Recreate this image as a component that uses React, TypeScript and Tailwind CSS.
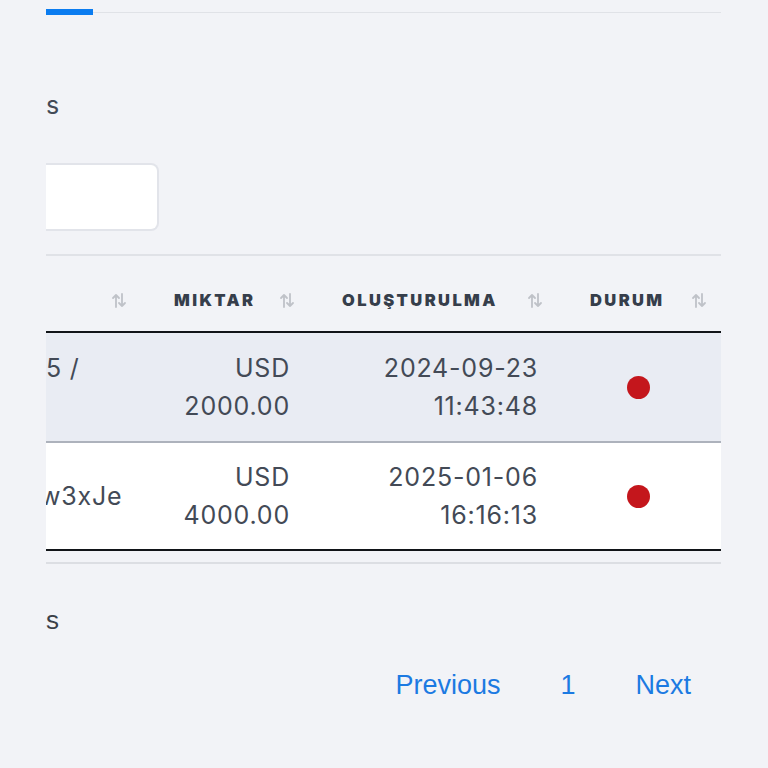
// App.tsx — clipped DataTables view (mobile, scrolled horizontally)

interface Row {
  ref: string[]
  refShift: boolean
  amount: string[]
  created: string[]
  stripe: boolean
}

const rows: Row[] = [
  { ref: ['5 /', '\u00a0'], refShift: false, amount: ['USD', '2000.00'], created: ['2024-09-23', '11:43:48'], stripe: true },
  { ref: ['w3xJe'], refShift: true, amount: ['USD', '4000.00'], created: ['2025-01-06', '16:16:13'], stripe: false },
]

function SortIcon({ className }: { className: string }) {
  return (
    <svg
      className={className}
      width="16"
      height="17"
      viewBox="0 0 16 17"
      fill="none"
      stroke="#bfc2c8"
      strokeWidth="1.8"
      strokeLinecap="round"
      strokeLinejoin="round"
    >
      {/* up arrow (left) */}
      <path d="M5 15V3M2 6l3-3 3 3" />
      {/* down arrow (right) */}
      <path d="M11 2v12M8 11l3 3 3-3" />
    </svg>
  )
}

export default function App() {
  return (
    <div className="w-[768px] h-[768px] bg-[#f2f3f7] overflow-hidden font-['Inter',sans-serif] text-[#434a56]">
      <div className="ml-[46px] w-[675px] overflow-hidden">
        {/* Tabs underline */}
        <div className="mt-[9px] flex items-center">
          <div className="w-[47px] h-[6px] bg-[#0b7cf0]" />
          <div className="flex-1 h-px bg-[#e0e2e7]" />
        </div>

        {/* Length label (clipped) */}
        <div className="mt-[74px] text-[25px] leading-[32px]">s</div>

        {/* Search input (clipped) */}
        <div className="mt-[42px] w-[113px] h-[68px] bg-white border-2 border-l-0 border-[#e2e4ea] rounded-r-[8px]" />

        <div className="mt-[23px] h-[2px] bg-[#e0e2e7]" />

        {/* Table */}
        <table className="w-[675px] table-fixed border-collapse">
          <colgroup>
            <col className="w-[104px]" />
            <col className="w-[168px]" />
            <col className="w-[248px]" />
            <col className="w-[155px]" />
          </colgroup>
          <thead>
            <tr className="border-b-2 border-[#111418]">
              <th className="relative pt-[34px] pb-[21px]">
                <SortIcon className="absolute right-[23px] top-[36px]" />
              </th>
              {['MIKTAR', 'OLUŞTURULMA', 'DURUM'].map((h, i) => (
                <th
                  key={h}
                  className="relative pl-[24px] pt-[34px] pb-[21px] text-left text-[16.5px] leading-[20px] font-black tracking-[2.4px] text-[#363e4b] whitespace-nowrap"
                >
                  {h}
                  <SortIcon className={`absolute top-[36px] ${i === 2 ? 'right-[14px]' : 'right-[23px]'}`} />
                </th>
              ))}
            </tr>
          </thead>
          <tbody className="text-[25px] leading-[38.5px] tracking-[0.8px]">
            {rows.map((r, idx) => (
              <tr
                key={idx}
                className={`border-b-2 ${r.stripe ? 'bg-[#e9ecf3] border-[#adb2bc]' : 'bg-white border-[#111418]'}`}
              >
                <td className={`align-middle whitespace-nowrap overflow-hidden ${r.stripe ? 'py-[15.5px]' : 'py-[14.5px]'}`}>
                  <div className={r.refShift ? '-ml-[6px]' : ''}>
                    {r.ref.map(t => <div key={t}>{t}</div>)}
                  </div>
                </td>
                <td className={`align-middle text-right pr-[28px] ${r.stripe ? 'py-[15.5px]' : 'py-[14.5px]'}`}>
                  {r.amount.map(t => <div key={t}>{t}</div>)}
                </td>
                <td className={`align-middle text-right pr-[28px] ${r.stripe ? 'py-[15.5px]' : 'py-[14.5px]'}`}>
                  {r.created.map(t => <div key={t}>{t}</div>)}
                </td>
                <td className="align-middle pr-[11px]">
                  <div className="mx-auto w-[23px] h-[23px] rounded-full bg-[#c4161c]" />
                </td>
              </tr>
            ))}
          </tbody>
        </table>

        <div className="mt-[11px] h-[2px] bg-[#dcdee3]" />

        {/* Info (clipped) */}
        <div className="mt-[40px] font-['Liberation_Sans',sans-serif] text-[26px] leading-[32px] text-[#3a3f47]">s</div>

        {/* Pagination */}
        <div className="mt-[32px] flex justify-end font-['Liberation_Sans',sans-serif] text-[27px] leading-[34px] text-[#1c7ae2]">
          <span className="px-[30px]">Previous</span>
          <span className="px-[30px]">1</span>
          <span className="px-[30px]">Next</span>
        </div>
      </div>
    </div>
  )
}
